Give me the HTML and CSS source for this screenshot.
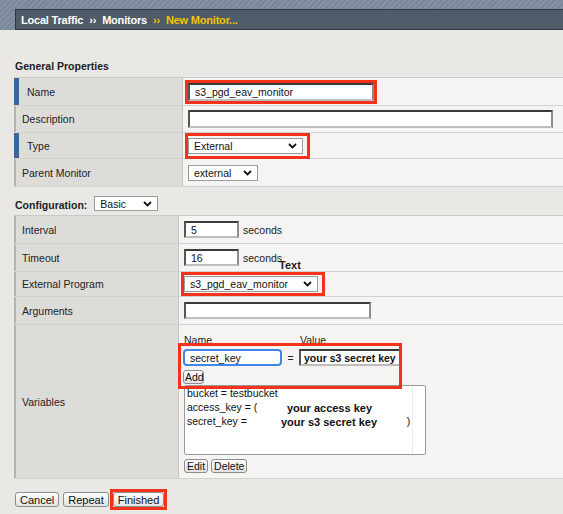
FILE: index.html
```html
<!DOCTYPE html>
<html lang="en">
<head>
  <meta charset="UTF-8">
  <title>New Monitor</title>
  <link rel="stylesheet" href="styles.css">
</head>
<body>

  <div class="topbar">
    <div class="crumbs">
      <span>Local Traffic</span>
      <span class="sep">&rsaquo;&rsaquo;</span>
      <span>Monitors</span>
      <span class="sep current">&rsaquo;&rsaquo;</span>
      <span class="current">New Monitor...</span>
    </div>
  </div>

  <div class="page">
    <div class="section-title">General Properties</div>

    <div class="form general">
      <div class="row req r-name">
        <div class="label">Name</div>
        <div class="value">
          <span class="mark"><input class="field w-name" type="text" value="s3_pgd_eav_monitor"></span>
        </div>
      </div>
      <div class="row r-desc">
        <div class="label">Description</div>
        <div class="value"><input class="field w-desc" type="text" value=""></div>
      </div>
      <div class="row req r-type">
        <div class="label">Type</div>
        <div class="value">
          <span class="mark mark-type">
            <span class="select w-type"><span>External</span><svg width="9" height="6" viewBox="0 0 9 6"><path d="M1 1l3.5 3.5L8 1" fill="none" stroke="#111" stroke-width="1.8"/></svg></span>
          </span>
        </div>
      </div>
      <div class="row r-parent">
        <div class="label">Parent Monitor</div>
        <div class="value">
          <span class="select w-parent"><span>external</span><svg width="9" height="6" viewBox="0 0 9 6"><path d="M1 1l3.5 3.5L8 1" fill="none" stroke="#111" stroke-width="1.8"/></svg></span>
        </div>
      </div>
    </div>

    <div class="config-line">
      <span class="config-title">Configuration:</span>
      <span class="select w-basic"><span>Basic</span><svg width="9" height="6" viewBox="0 0 9 6"><path d="M1 1l3.5 3.5L8 1" fill="none" stroke="#111" stroke-width="1.8"/></svg></span>
    </div>

    <div class="form conf">
      <div class="row r-28">
        <div class="label">Interval</div>
        <div class="value"><input class="field w-num" type="text" value="5"><span class="unit">seconds</span></div>
      </div>
      <div class="row r-28">
        <div class="label">Timeout</div>
        <div class="value"><input class="field w-num" type="text" value="16"><span class="unit">seconds</span></div>
      </div>
      <div class="row r-25">
        <div class="label">External Program</div>
        <div class="value value-ext">
          <span class="note">Text</span>
          <span class="mark mark-ext">
            <span class="select w-ext"><span>s3_pgd_eav_monitor</span><svg width="9" height="6" viewBox="0 0 9 6"><path d="M1 1l3.5 3.5L8 1" fill="none" stroke="#111" stroke-width="1.8"/></svg></span>
          </span>
        </div>
      </div>
      <div class="row r-28">
        <div class="label">Arguments</div>
        <div class="value"><input class="field w-args" type="text" value=""></div>
      </div>
      <div class="row r-vars">
        <div class="label">Variables</div>
        <div class="value value-vars">
          <div class="var-heads"><span class="vh-name">Name</span><span>Value</span></div>
          <div class="mark mark-vars">
            <div class="var-inputs">
              <input class="field focus w-vname" type="text" value="secret_key">
              <span class="eq">=</span>
              <input class="field w-vvalue" type="text" value="your s3 secret key">
            </div>
            <button class="btn btn-add">Add</button>
          </div>
          <div class="varlist">
            <div>bucket = testbucket</div>
            <div>access_key = (</div>
            <div>secret_key = <span class="tail">)</span></div>
            <div class="cover">
              <div class="c1">your access key</div>
              <div class="c2">your s3 secret key</div>
            </div>
            <div class="track"></div>
          </div>
          <div class="var-actions">
            <button class="btn">Edit</button>
            <button class="btn">Delete</button>
          </div>
        </div>
      </div>
    </div>

    <div class="actions">
      <button class="btn btn-lg">Cancel</button>
      <button class="btn btn-lg">Repeat</button>
      <span class="mark"><button class="btn btn-lg">Finished</button></span>
    </div>
  </div>

</body>
</html>
```

FILE: styles.css
```css
* {
  box-sizing: border-box;
}

body {
  margin: 0;
  background-color: #e9e8e4;
  font-family: "Liberation Sans", Arial, sans-serif;
  font-size: 10.5px;
  color: #222;
}

/* header */
.topbar {
  height: 30px;
  padding: 9px 0 0 15px;
  background-color: #788799;
  background-image: repeating-linear-gradient(-45deg, rgba(255, 255, 255, 0.09) 0 2px, transparent 2px 4px);
}

.crumbs {
  height: 21px;
  display: flex;
  align-items: center;
  gap: 6px;
  padding-left: 5px;
  background-color: #505b69;
  border: 1px solid #30363f;
  border-right: none;
  color: #fff;
  font-weight: bold;
  font-size: 11px;
  letter-spacing: -0.2px;
}

.crumbs .sep {
  font-size: 11px;
}

.crumbs .current {
  color: #f4c400;
}

/* sections */
.section-title {
  padding: 30px 0 4px 15px;
  line-height: 13px;
  font-weight: bold;
}

.form {
  margin-left: 14px;
  border-top: 1px solid #cbcac6;
}

.row {
  display: flex;
  border-bottom: 1px solid #d3d2ce;
}

.label {
  width: 169px;
  flex: none;
  display: flex;
  align-items: center;
  padding-left: 6px;
  background-color: #dedcd9;
  border-left: 2px solid #b5b4b0;
  border-right: 1px solid #c6c5c1;
}

.row.req .label {
  border-left: 5px solid #3b6899;
  padding-left: 8px;
}

.conf .label {
  width: 165px;
}

.value {
  flex: 1;
  display: flex;
  align-items: center;
  padding-left: 5px;
  background-color: #f5f4f2;
}

.r-name { height: 28px; }
.r-desc { height: 27px; }
.r-type { height: 26px; }
.r-parent { height: 28px; }
.r-28 { height: 28px; }
.r-25 { height: 25px; }
.r-vars { height: 154px; }

/* controls */
.field {
  height: 18px;
  padding: 0 5px;
  margin: 0;
  border: 2px solid;
  border-color: #3a3a3a #8c8c8c #bdbdbd #555;
  background: #fff;
  font-family: "Liberation Sans", Arial, sans-serif;
  font-size: 10.5px;
  color: #111;
  outline: none;
}

.field.focus {
  border: 2px solid #3f86ea;
  border-radius: 4px;
}

.w-name { width: 186px; }
.w-desc { width: 365px; }
.w-num { width: 55px; height: 17px; }
.w-args { width: 187px; height: 17px; }
.w-vname { width: 99px; height: 17px; }
.w-vvalue {
  width: 106px;
  height: 17px;
  padding: 0 0 0 3px;
  font-weight: bold;
  font-size: 10.5px;
  border-right: none;
}

.select {
  display: inline-flex;
  align-items: center;
  justify-content: space-between;
  height: 16px;
  padding: 0 5px 0 5px;
  border: 1px solid #9b9b9b;
  background: #fff;
  color: #111;
}

.w-type { width: 115px; }
.w-parent { width: 70px; }
.w-basic { width: 64px; height: 15px; }
.w-ext { width: 134px; }

.unit {
  margin-left: 4px;
}

.mark {
  display: inline-flex;
  border: 3px solid #f2321a;
  margin-left: -3px;
}

.mark-type {
  padding: 2px 4px 2px 0;
}

.mark-ext {
  padding: 1px 4px 1px 0;
}

.value-ext {
  position: relative;
  padding-left: 5px;
}

.note {
  position: absolute;
  left: 100px;
  top: -13px;
  font-weight: bold;
  font-size: 11px;
}

/* config line */
.config-line {
  display: flex;
  align-items: flex-end;
  gap: 7px;
  height: 15px;
  margin: 9px 0 4px 15px;
}

.config-title {
  font-weight: bold;
  line-height: 12px;
}

/* variables */
.value-vars {
  flex-direction: column;
  align-items: flex-start;
  padding-top: 9px;
}

.var-heads {
  height: 9px;
  line-height: 12px;
  display: flex;
}

.vh-name {
  width: 116px;
}

.mark-vars {
  display: flex;
  flex-direction: column;
  align-items: flex-start;
  gap: 4px;
  width: 224px;
  margin-left: -6px;
  padding: 3px 0 2px 2px;
  overflow: hidden;
  position: relative;
  z-index: 1;
}

.var-inputs {
  display: flex;
  align-items: center;
}

.eq {
  width: 17px;
  text-align: center;
}

.btn {
  height: 14px;
  padding: 0 1px;
  margin: 0;
  border: 1px solid #8d8d8d;
  border-radius: 3px;
  background: linear-gradient(#fdfdfd, #e2e2e2);
  font-family: "Liberation Sans", Arial, sans-serif;
  font-size: 10.5px;
  line-height: 12px;
  color: #111;
}

.btn-add {
  width: 21px;
}

.varlist {
  position: relative;
  width: 242px;
  height: 70px;
  margin-top: -4px;
  padding: 0 0 0 2px;
  border: 1px solid #9a9a9a;
  border-radius: 2px;
  background: #fff;
  line-height: 14px;
  color: #111;
}

.tail {
  margin-left: 157px;
}

.cover {
  position: absolute;
  left: 72px;
  top: 15px;
  width: 149px;
  height: 29px;
  background: #fff;
  font-weight: bold;
  font-size: 11px;
  line-height: 14px;
}

.cover .c1 { padding-left: 30px; }
.cover .c2 { padding-left: 24px; }

.track {
  position: absolute;
  right: 0;
  top: 0;
  bottom: 0;
  width: 13px;
  border-left: 1px solid #ececec;
}

.var-actions {
  display: flex;
  gap: 3px;
  margin-top: 4px;
}

.var-actions .btn {
  padding: 0 2px;
}

/* bottom buttons */
.actions {
  display: flex;
  align-items: center;
  gap: 4px;
  margin: 10px 0 0 15px;
}

.btn-lg {
  height: 15px;
  padding: 0 4px;
  font-size: 11px;
}

.actions .mark {
  margin-left: -3px;
}
```
